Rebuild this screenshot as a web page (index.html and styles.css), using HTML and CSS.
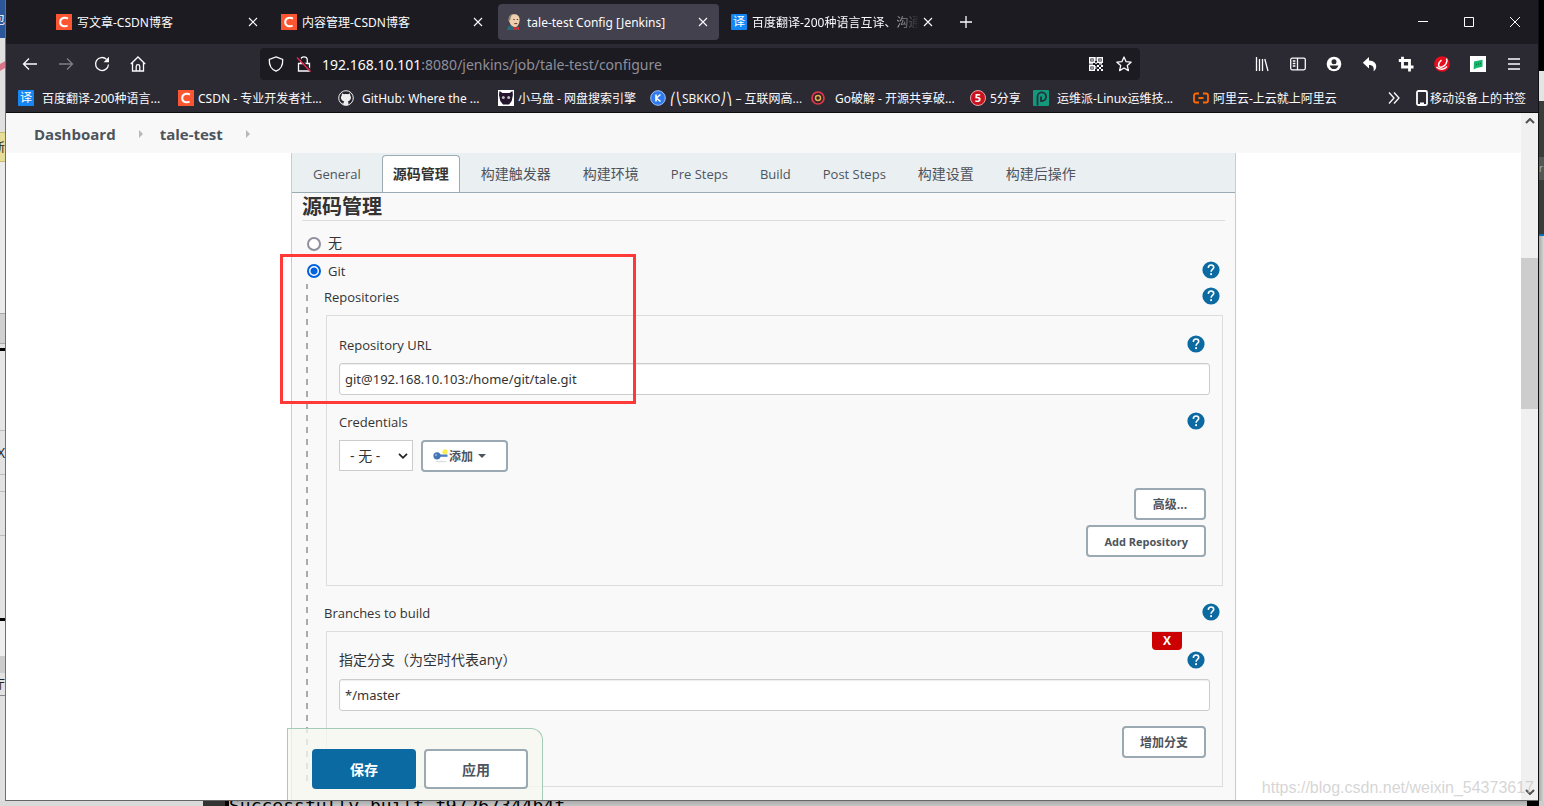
FILE: index.html
```html
<!DOCTYPE html>
<html lang="zh-CN">
<head>
<meta charset="utf-8">
<title>tale-test Config [Jenkins]</title>
<link rel="stylesheet" href="styles.css">
</head>
<body>
<svg class="defs" aria-hidden="true">
  <symbol id="help" viewBox="0 0 18 18"><circle cx="9" cy="9" r="8.6" fill="#0b6aa2"/><path d="M6.3 6.9C6.4 5 7.6 4 9.1 4s2.6 1 2.6 2.5c0 1.900-2.600 2.100-2.600 4.200" fill="none" stroke="#fff" stroke-width="1.600"/><rect x="8.200" y="12.200" width="1.800" height="1.900" fill="#fff"/></symbol>
  <symbol id="close" viewBox="0 0 10 10"><path d="M1 1l8 8M9 1L1 9" stroke="#fbfbfe" stroke-width="1.100"/></symbol>
  <symbol id="csdn" viewBox="0 0 16 16"><path fill="#fc5531" d="M0 0h16v16H0z"/><path d="M12 4.600C9.500 3.200 4.300 3.300 4.200 8.200c0 4.300 4.600 4.600 7.400 3.400" fill="none" stroke="#fff" stroke-width="2"/></symbol>
  <symbol id="crumb" viewBox="0 0 4 8"><path d="M0 0l4 4-4 4z" fill="#b8b8b8"/></symbol>
</svg>
<div class="desktop">
  <div class="strip-left" aria-hidden="true">
    <div class="s-blue">包</div><div class="s-pen"></div><div class="s-yellow">新</div><div class="s-light"></div><div class="s-grey"></div><div class="s-black"></div><div class="s-mid"></div><div class="s-x">X</div><div class="s-row"></div><div class="s-row2"></div><div class="s-tall"></div><div class="s-black"></div><div class="s-pale"></div><div class="s-grey2"></div><div class="s-text">厅</div><div class="s-end"></div>
  </div>
  <div class="window">
    <header class="tabs">
      <div class="tab"><svg class="fav"><use href="#csdn"/></svg><span class="tab-title">写文章-CSDN博客</span><button class="tab-close" aria-label="关闭"><svg><use href="#close"/></svg></button></div>
      <div class="tab"><svg class="fav"><use href="#csdn"/></svg><span class="tab-title">内容管理-CSDN博客</span><button class="tab-close" aria-label="关闭"><svg><use href="#close"/></svg></button></div>
      <div class="tab tab-on"><svg class="fav" viewBox="0 0 16 16"><path d="M1 16c0-3 2-4.500 4-4.500l4 2 3-1 2 3.500z" fill="#2d6a78"/><path d="M2.800 5C2.800 2 5 .2 8.200.2s5.600 2 5.400 5.600c-.1 3.700-1.700 7.300-4.500 7.300-3 0-5-2.700-5.400-4.800-.8-.4-1.100-2.100-.9-3.300z" fill="#efd0ae"/><path d="M2.900 7C2 2.500 4.200.2 7 .3 5.200 1.500 4.500 3.500 4.300 6z" fill="#8d8270"/><path d="M7.300 5.500h1.400M10.800 5.500h1.300M8.300 9.600h3" stroke="#5b3d2e"/><path d="M8 12.700l2.500 1 2.500-1v3.300l-2.500-1L8 16z" fill="#e02b2b"/></svg><span class="tab-title">tale-test Config [Jenkins]</span><button class="tab-close" aria-label="关闭"><svg><use href="#close"/></svg></button></div>
      <div class="tab"><span class="fav fan">译</span><span class="tab-title fade">百度翻译-200种语言互译、沟通</span><button class="tab-close" aria-label="关闭"><svg><use href="#close"/></svg></button></div>
      <button class="new-tab" aria-label="新标签"><svg viewBox="0 0 12 12"><path d="M6 0v12M0 6h12" stroke="#fbfbfe" stroke-width="1.300"/></svg></button>
      <div class="win-btns">
        <button aria-label="最小化"><svg viewBox="0 0 10 10"><path d="M0 4.500h10" stroke="#fff"/></svg></button>
        <button aria-label="最大化"><svg viewBox="0 0 10 10"><path d="M.5.5h9v9h-9z" fill="none" stroke="#fff"/></svg></button>
        <button aria-label="关闭窗口"><svg viewBox="0 0 10 10"><path d="M0 0l10 10M10 0L0 10" stroke="#fff"/></svg></button>
      </div>
    </header>
    <nav class="toolbar">
      <button aria-label="后退"><svg viewBox="0 0 16 16"><path d="M15 8H1.500M7 2.500L1.500 8 7 13.500" class="ln"/></svg></button>
      <button aria-label="前进" class="dim"><svg viewBox="0 0 16 16"><path d="M1 8h13.500M9 2.500L14.500 8 9 13.500" class="ln"/></svg></button>
      <button aria-label="刷新"><svg viewBox="0 0 16 16"><path d="M14.500 8.500A6.500 6.500 0 1 1 12.600 3.400" class="ln"/><path d="M15 .8v5.400H9.600z" fill="#fbfbfe"/></svg></button>
      <button aria-label="主页"><svg viewBox="0 0 16 16"><path d="M.8 8L8 1l7.200 7M2.500 6.700V15h11V6.700M6.200 15v-4.500a1.800 1.800 0 0 1 3.600 0V15" class="ln"/></svg></button>
      <div class="url">
        <svg viewBox="0 0 16 16"><path d="M8 .9L14.700 3.400C15 9 12.500 13.500 8 15.200 3.500 13.500 1 9 1.300 3.400z" class="ln"/></svg>
        <svg class="lock" viewBox="0 0 16 16"><path d="M2.500 7.500h11V15h-11zM4.700 7.500V4.200a3.300 3.300 0 0 1 6.600 0v3.300" class="ln"/><path d="M2.500 1l13 14" stroke="#1c1b22" stroke-width="1.500"/><path d="M1 1.500l13.500 14" stroke="#e22850" stroke-width="1.500"/></svg>
        <span class="addr"><b>192.168.10.101</b>:8080/jenkins/job/tale-test/configure</span>
        <svg class="qr" viewBox="0 0 14 14"><path d="M.7.7h4.600v4.600H.7zM8.700.7h4.600v4.600H8.700zM.7 8.700h4.600v4.600H.7z" fill="none" stroke="#fbfbfe" stroke-width="1.400"/><path d="M2.300 2.300h1.500v1.500H2.300zM10.300 2.300h1.500v1.500h-1.500zM2.300 10.300h1.500v1.500H2.300zM6.300 0h1.200v4H6.300zM6.300 5.500h1.500V7H6.300zM0 6.300h4v1.200H0zM8 8h2v2H8zM12 8h2v2h-2zM10 10h2v2h-2zM8 12h2v2H8zM12 12h2v2h-2zM10 6.300h3v1.200h-3zM6.300 9h1v3h-1z" fill="#fbfbfe"/></svg>
        <svg class="star" viewBox="0 0 16 16"><path d="M8 1l2.100 4.700 5 .5-3.800 3.400 1.100 5L8 12l-4.400 2.600 1.100-5L.9 6.200l5-.5z" class="ln" stroke-linejoin="round"/></svg>
      </div>
      <button aria-label="书库"><svg viewBox="0 0 16 16"><path d="M2.500 1v14M5.500 3v12M8.500 3v12M10.800 3l3.200 12" class="ln"/></svg></button>
      <button aria-label="侧栏"><svg viewBox="0 0 16 16"><rect x=".7" y="2.200" width="14.600" height="11.600" rx="1.500" class="ln"/><path d="M7.500 2v12M2.800 5h2.600M2.800 7.500h2.600M2.800 10h2.600" class="ln"/></svg></button>
      <button aria-label="账户"><svg viewBox="0 0 16 16"><circle cx="8" cy="8" r="7.300" fill="#fff"/><circle cx="8" cy="5.800" r="2.500" fill="#2b2a33"/><path d="M3.700 9.500h8.600c-.5 2.500-2.300 3.600-4.300 3.600s-3.800-1.100-4.300-3.600z" fill="#2b2a33"/></svg></button>
      <button aria-label="撤销"><svg viewBox="0 0 16 16"><path d="M7 1v3.500c5 0 7.500 3 7.200 6.500-.1 1.800-1.200 3.300-2.700 4.200C12.500 11 10.500 9 7 9v3.500L.8 6.800z" fill="#fff"/></svg></button>
      <button aria-label="截图"><svg viewBox="0 0 16 16"><path d="M4.500 .8v10.200h11M.8 4.500h10.700V15.500" fill="none" stroke="#fff" stroke-width="2.800"/></svg></button>
      <button aria-label="扩展"><svg viewBox="0 0 16 16"><circle cx="8" cy="8" r="7.800" fill="#e60d1c"/><path d="M12.500 2.500c1.500 3-1 7-4 8.300-2.500 1-4.300 0-3.900-2.300.3-1.700 1.500-3.300 2.900-4.300M2.500 11c3.500 3.500 8 2.500 10.500-.5" fill="none" stroke="#fff" stroke-width="1.500"/></svg></button>
      <button aria-label="消息"><svg viewBox="0 0 16 16"><path d="M0 0h16v16H0z" fill="#fff"/><path d="M4 5.500l8.500-1.800v7L6.500 12l-2.800 1.500z" fill="#12b76a"/><path d="M6 8.400h1M8 8h1M10 7.600h1" stroke="#086c3c"/></svg></button>
      <button aria-label="菜单"><svg viewBox="0 0 16 16"><path d="M2 3h12M2 8h12M2 13h12" class="ln"/></svg></button>
    </nav>
    <nav class="bookmarks">
      <a href="#" class="wide-gap"><span class="fav fan">译</span><span>百度翻译-200种语言...</span></a>
      <a href="#"><svg class="fav"><use href="#csdn"/></svg><span>CSDN - 专业开发者社...</span></a>
      <a href="#" class="wide-gap"><svg class="fav" viewBox="0 0 16 16"><circle cx="8" cy="8" r="7.300" fill="#24232b" stroke="#eee"/><path d="M5.800 15v-2c-1.800.2-2-.9-2.800-1.300M4 3.200l2 1.100c1.300-.4 2.700-.4 4 0l2-1.100.3 2.300c1.600 2.400.3 5.200-2.300 5.700.3.600.4 1.200.4 1.800v2.200H5.600V13c0-.6.100-1.200.5-1.800C3.300 10.700 2.100 8 3.700 5.500z" fill="#eee"/></svg><span>GitHub: Where the ...</span></a>
      <a href="#"><svg class="fav" viewBox="0 0 16 16"><path d="M0 0h16v16H0z" fill="#fff"/><path d="M1.500 1l3 2h7l3-2 .4 4-1.200 6L11 14.500H5L2.300 11 1 5z" fill="#25152d"/><circle cx="5.300" cy="7.500" r="1.500" fill="#bbb"/><circle cx="10.700" cy="7.500" r="1.500" fill="#bbb"/></svg><span>小马盘 - 网盘搜索引擎</span></a>
      <a href="#"><svg class="fav" viewBox="0 0 16 16"><circle cx="8" cy="8" r="7.300" fill="#2f7af0" stroke="#9fc0f5"/><path d="M6 4.500v7M10.500 4.500L6.300 8l4.200 3.500" fill="none" stroke="#fff" stroke-width="1.600"/></svg><span class="narrow">⎛⎝SBKKO⎠⎞ – 互联网高...</span></a>
      <a href="#" class="wide-gap"><svg class="fav" viewBox="0 0 16 16"><circle cx="7" cy="8" r="6" fill="#35232b" stroke="#e8374c" stroke-width="1.700"/><circle cx="7" cy="8" r="2.500" fill="none" stroke="#e2b04a" stroke-width="1.500"/></svg><span>Go破解 - 开源共享破...</span></a>
      <a href="#"><span class="fav five">5</span><span>5分享</span></a>
      <a href="#" class="wide-gap"><svg class="fav" viewBox="0 0 16 16"><rect width="16" height="16" rx="1" fill="#12997c"/><path d="M4.500 15.500V6.500a4.300 4.300 0 1 1 4.300 4.500H8V6.500" fill="none" stroke="#24313a" stroke-width="1.800"/></svg><span>运维派-Linux运维技...</span></a>
      <a href="#"><svg class="fav" viewBox="0 0 16 16"><path d="M6 3.500H3a2 2 0 0 0-2 2v5a2 2 0 0 0 2 2h3M10 3.500h3a2 2 0 0 1 2 2v5a2 2 0 0 1-2 2h-3M5.500 8h5" fill="none" stroke="#ff6a00" stroke-width="1.800"/></svg><span>阿里云-上云就上阿里云</span></a>
      <button class="more" aria-label="更多书签"><svg viewBox="0 0 12 12"><path d="M1 .5L6 6l-5 5.500M6 .5L11 6l-5 5.500" class="ln"/></svg></button>
      <a href="#" class="mobile"><svg viewBox="0 0 12 16"><rect x="1" y="1" width="10" height="14" rx="1.500" fill="none" stroke="#fff" stroke-width="1.800"/><path d="M4 13.500h4" stroke="#fff" stroke-width="2"/></svg><span>移动设备上的书签</span></a>
    </nav>
    <div class="viewport">
      <main class="page">
        <nav class="crumbs"><a href="#">Dashboard</a><svg><use href="#crumb"/></svg><a href="#">tale-test</a><svg><use href="#crumb"/></svg></nav>
        <div class="stage">
          <form class="panel">
            <div class="sections">
              <a href="#">General</a><a href="#" class="on zh">源码管理</a><a href="#" class="zh">构建触发器</a><a href="#" class="zh">构建环境</a><a href="#">Pre Steps</a><a href="#">Build</a><a href="#">Post Steps</a><a href="#" class="zh">构建设置</a><a href="#" class="zh">构建后操作</a>
            </div>
            <div class="body">
              <h1>源码管理</h1>
              <div class="row first"><input type="radio" name="scm" id="none"><label for="none" class="zh">无</label></div>
              <div class="row git"><input type="radio" name="scm" id="git" checked><label for="git">Git</label><button type="button" class="help" aria-label="帮助"><svg><use href="#help"/></svg></button></div>
              <div class="nested">
                <div class="row"><span>Repositories</span><button type="button" class="help" aria-label="帮助"><svg><use href="#help"/></svg></button></div>
                <section class="box">
                  <div class="row"><label for="repo">Repository URL</label><button type="button" class="help" aria-label="帮助"><svg><use href="#help"/></svg></button></div>
                  <input class="text" id="repo" type="text" value="git@192.168.10.103:/home/git/tale.git">
                  <div class="row spaced"><label for="cred">Credentials</label><button type="button" class="help" aria-label="帮助"><svg><use href="#help"/></svg></button></div>
                  <div class="controls">
                    <div class="select"><select id="cred"><option>- 无 -</option></select><svg viewBox="0 0 10 6"><path d="M1 .8l4 4 4-4" fill="none" stroke="#222" stroke-width="1.700"/></svg></div>
                    <button type="button" class="btn add"><svg class="key" viewBox="0 0 16 14"><ellipse cx="8" cy="12.500" rx="6" ry=".8" fill="#ddd"/><circle cx="12" cy="2.800" r="2.600" fill="#fbf04e"/><path d="M5 5.500h9.500v2.300H5z" fill="#4d7fc0"/><circle cx="4" cy="6.800" r="3.600" fill="#4374b7"/><circle cx="3" cy="6" r="1.200" fill="#83a8d8"/></svg>添加<svg class="caret" viewBox="0 0 8 4"><path d="M0 0h8L4 4z" fill="#4d545d"/></svg></button>
                  </div>
                  <div class="actions"><button type="button" class="btn">高级...</button><button type="button" class="btn en">Add Repository</button></div>
                </section>
                <div class="row spaced"><span>Branches to build</span><button type="button" class="help" aria-label="帮助"><svg><use href="#help"/></svg></button></div>
                <section class="box">
                  <button type="button" class="remove">X</button>
                  <div class="row"><label for="branch" class="zh">指定分支（为空时代表any）</label><button type="button" class="help" aria-label="帮助"><svg><use href="#help"/></svg></button></div>
                  <input class="text" id="branch" type="text" value="*/master">
                  <div class="actions close"><button type="button" class="btn">增加分支</button></div>
                </section>
              </div>
            </div>
          </form>
          <div class="save-bar"><button class="save">保存</button><button class="apply">应用</button></div>
          <div class="mark"></div>
        </div>
      </main>
      <div class="scroll" aria-hidden="true"><svg viewBox="0 0 10 6"><path d="M1 5l4-4 4 4" fill="none" stroke="#505050" stroke-width="2"/></svg><div class="thumb"></div><svg viewBox="0 0 10 6"><path d="M1 1l4 4 4-4" fill="none" stroke="#505050" stroke-width="2"/></svg></div>
      <div class="watermark">https://blog.csdn.net/weixin_54373617</div>
    </div>
  </div>
  <div class="strip-right" aria-hidden="true"><div class="r-black"></div><div class="r-white"></div><div class="r-dark"></div><div class="r-cell">r</div><div class="r-dark2"></div><div class="r-rest"></div></div>
  <div class="strip-bottom" aria-hidden="true"><div class="b-left"></div><div class="b-dark"></div><div class="b-term">Successfully built f97267344b4f</div><div class="b-black"></div><div class="b-end"></div></div>
</div>
</body>
</html>
```

FILE: styles.css
```css
* { box-sizing: border-box; }
body { margin: 0; font-family: "Open Sans", "Noto Sans CJK SC", sans-serif; font-size: 13px; color: #333; }
button { border: 0; padding: 0; margin: 0; background: none; font: inherit; color: inherit; }
a { color: inherit; text-decoration: none; }
svg { display: block; flex: none; }
.defs { position: absolute; width: 0; height: 0; }
.ln { fill: none; stroke: #fbfbfe; stroke-width: 1.3; }

.desktop { display: grid; grid-template-columns: 6px minmax(0, 1fr) 6px; grid-template-rows: minmax(0, 1fr) 5px; height: 100vh; overflow: hidden; background: #c8c8c8; }
.window { display: flex; flex-direction: column; min-height: 0; background: #fff; border-bottom: 1px solid #666; }

.strip-left { display: flex; flex-direction: column; overflow: hidden; border-right: 1px solid #707070; background: #e2e2e2; font-size: 12px; color: #222; }
.strip-left div { flex: none; display: flex; justify-content: flex-end; align-items: center; overflow: hidden; }
.s-blue { height: 38px; background: #2b579a; color: #fff; }
.s-pen { height: 94px; background: linear-gradient(150deg, #e0e0e0 22px, #d8768a 23px, #d8768a 28px, #e0e0e0 29px); }
.s-yellow { height: 30px; background: #e6dd98; border: solid #c7bb6a; border-width: 1px 0; }
.s-light { height: 151px; background: #ebebeb; }
.s-grey { height: 31px; background: #d0d0d0; border: solid #aaa; border-width: 1px 0; }
.strip-left .s-black { height: 3px; background: #000; margin-top: 4px; }
.s-mid { height: 80px; background: #e6e6e6; border-bottom: 1px solid #bbb; }
.s-x { height: 44px; font-size: 14px; border-bottom: 1px solid #bbb; }
.s-row { height: 17px; border-bottom: 1px solid #bbb; }
.s-row2 { height: 44px; border-bottom: 1px solid #bbb; }
.s-tall { height: 78px; }
.s-pale { height: 35px; background: #eee; }
.s-grey2 { height: 17px; background: #ccc; }
.s-text { height: 23px; border-bottom: 1px solid #888; }
.s-end { height: 120px; background: #e0e0e0; }

.strip-right { display: flex; flex-direction: column; border-left: 1px solid #111; }
.r-black { height: 71px; background: #000; }
.r-white { height: 30px; background: #e4e4e4; }
.r-dark { height: 56px; background: #383c3b; }
.r-cell { height: 23px; background: #535756; color: #aaa; font-size: 10px; line-height: 22px; overflow: hidden; }
.r-dark2 { height: 56px; background: #383c3b; border-bottom: 2px solid #0a72bd; }
.r-rest { flex: 1; background: linear-gradient(90deg, #a8a8a8, #d8d8d8); }

.strip-bottom { grid-column: 1 / -1; display: flex; overflow: hidden; background: #b5b5b5; }
.b-left { width: 203px; background: #dadada; }
.b-dark { width: 26px; background: linear-gradient(90deg, #333 22px, #000 22px); }
.b-term { flex: 1; background: linear-gradient(#969696, #c4c4c4); font: 18px/18px "DejaVu Sans Mono", monospace; color: #000; white-space: nowrap; margin-top: -4px; }
.b-black { width: 12px; background: #000; }
.b-end { width: 5px; background: #ccc; }

.tabs, .bookmarks { font-family: "Noto Sans", "Noto Sans CJK SC", sans-serif; }
.tabs { display: flex; align-items: center; gap: 4px; height: 44px; flex: none; padding-left: 42px; background: #1c1b22; color: #fbfbfe; font-size: 12px; }
.tab { display: flex; align-items: center; width: 221px; height: 36px; padding: 0 7px 0 8px; border-radius: 4px; }
.tab-on { background: #42414d; }
.fav { width: 16px; height: 16px; flex: none; }
.fan { display: flex; align-items: center; justify-content: center; background: #1487f5; border-radius: 1px; color: #fff; font-size: 12px; line-height: 16px; }
.tab-title { flex: 1; min-width: 0; margin-left: 5px; overflow: hidden; white-space: nowrap; }
.fade { -webkit-mask-image: linear-gradient(90deg, #000 80%, transparent); mask-image: linear-gradient(90deg, #000 80%, transparent); }
.tab-close { width: 18px; display: flex; justify-content: center; }
.tab-close svg { width: 10px; height: 10px; }
.new-tab { width: 36px; display: flex; justify-content: center; }
.new-tab svg { width: 12px; height: 12px; }
.win-btns { display: flex; margin-left: auto; }
.win-btns button { width: 46px; display: flex; justify-content: center; }
.win-btns svg { width: 10px; height: 10px; }

.toolbar { display: flex; align-items: center; gap: 4px; flex: none; height: 40px; padding: 0 8px; background: #2b2a33; }
.toolbar > button { width: 32px; height: 32px; display: flex; align-items: center; justify-content: center; }
.toolbar > button svg { width: 16px; height: 16px; }
.dim { opacity: .4; }
.url { flex: 1; min-width: 0; display: flex; align-items: center; height: 32px; margin: 0 102px; padding: 0 8px; background: #1c1b22; border-radius: 4px; }
.url svg { width: 16px; height: 16px; }
.url .lock { margin-left: 12px; }
.addr { flex: 1; margin-left: 10px; font-family: "Noto Sans", sans-serif; font-size: 14px; color: #8f8f9a; white-space: nowrap; overflow: hidden; }
.addr b { font-weight: 400; color: #fbfbfe; }
.url .qr { width: 14px; height: 14px; }
.url .star { margin-left: 13px; }

.bookmarks { display: grid; grid-template-columns: 160px 160px 160px 152px 161px 159px 63px 160px 150px 1fr auto; align-items: center; flex: none; height: 29px; padding: 0 12px; background: #2b2a33; border-bottom: 1px solid #0c0c0d; color: #fbfbfe; font-size: 12px; }
.bookmarks a { display: flex; align-items: center; gap: 4px; white-space: nowrap; }
.bookmarks .wide-gap { gap: 8px; }
.bookmarks .narrow { font-family: "Open Sans", "Noto Sans CJK SC", sans-serif; }
.five { border-radius: 8px; background: #c91420; border: 1px solid #e7a3a6; font-size: 11px; font-weight: 700; line-height: 14px; text-align: center; }
.more { display: flex; justify-content: flex-end; padding-right: 16px; }
.more svg { width: 12px; height: 12px; }
.bookmarks .mobile { gap: 2px; }
.mobile svg { width: 12px; height: 16px; }

.viewport { position: relative; flex: 1; min-height: 0; display: flex; }
.page { flex: 1; min-width: 0; display: flex; flex-direction: column; overflow: hidden; background: #fff; }
.crumbs { display: flex; align-items: center; flex: none; height: 40px; padding: 1px 28px 0; background: #f8f8f8; font-size: 15px; font-weight: 700; color: #4d545d; }
.crumbs svg { width: 4px; height: 8px; margin: 0 17px 0 23px; }
.stage { position: relative; flex: 1; min-height: 0; width: 100%; max-width: 945px; margin: 0 auto; }
.panel { height: 100%; overflow: hidden; border: solid #ccc; border-width: 0 1px; background: #f9f9f9; }
.sections { display: flex; align-items: flex-end; gap: 10px; height: 40px; padding: 0 10px; background: #eaeff2; border-bottom: 1px solid #9aabb5; color: #4d545d; white-space: nowrap; line-height: 36px; }
.sections a { padding: 0 10px; border: 1px solid transparent; border-bottom: 0; border-radius: 4px 4px 0 0; }
.sections .on { background: #fff; border-color: #9aabb5; font-weight: 700; color: #333; }
.body { padding: 0 10px; }
h1 { margin: 0; height: 28px; border-bottom: 1px solid #ddd; font-size: 20px; line-height: 28px; }
.row { display: flex; align-items: center; height: 26px; }
.first { height: 28px; margin-top: 9px; }
.row input { appearance: none; width: 14px; height: 14px; margin: 0 7px 0 5px; border: 2px solid #8f8f9d; border-radius: 50%; background: #fff; }
.row input:checked { border-color: #0060df; background: radial-gradient(circle, #0060df 3px, #fff 4px); }
.zh { font-size: 14px; }
.row .zh { line-height: 18px; padding-bottom: 2px; }
.help { margin: 0 5px 2px auto; }
.help svg { width: 18px; height: 18px; }
.nested { padding-left: 22px; background: repeating-linear-gradient(#aaa 0 5px, transparent 5px 11px, #aaa 11px 12px) 4px 0 / 2px 100% no-repeat; }
.box { position: relative; margin: 5px 2px 0; padding: 16px 12px 28px; border: 1px solid #ddd; }
.spaced { margin-top: 14px; }
.text { display: block; width: 100%; height: 32px; margin-top: 5px; padding: 0 5px; border: 1px solid #ccc; border-radius: 3px; background: #fff; box-shadow: inset 0 1px 1px #eee; font: 13px "Noto Sans", sans-serif; color: #333; }
.controls { display: flex; gap: 8px; margin-top: 5px; }
.select { position: relative; width: 74px; }
.select select { appearance: none; width: 100%; height: 31px; padding: 0 10px; border: 1px solid #ccc; border-radius: 0; background: #fff; font: inherit; font-size: 14px; color: #333; }
.select svg { position: absolute; right: 5px; top: 13px; width: 10px; height: 6px; }
.btn { min-width: 72px; height: 32px; padding: 0 16px; border: 2px solid #9aa9b2; border-radius: 4px; background: #fff; font-size: 12px; font-weight: 700; color: #4d545d; }
.en { font-size: 11px; }
.add { display: flex; align-items: center; width: 87px; padding: 0 10px; }
.key { width: 16px; height: 14px; }
.caret { width: 8px; height: 4px; margin-left: 5px; }
.actions { display: flex; flex-direction: column; align-items: flex-end; gap: 5px; margin: 16px 4px 0 0; }
.close { margin-top: 15px; }
.remove { position: absolute; top: 0; right: 40px; width: 30px; height: 18px; background: #c00; border-radius: 0 0 4px 4px; color: #fff; font-size: 12px; font-weight: 700; line-height: 18px; }
.save-bar { position: absolute; left: -4px; bottom: 0; display: flex; gap: 8px; padding: 20px 14px 11px 24px; border: 1px solid #a3cdb8; border-bottom: 0; border-radius: 0 12px 0 0; background: rgba(245, 247, 237, .75); }
.save-bar button { width: 104px; height: 40px; border-radius: 4px; font-size: 14px; font-weight: 700; }
.save { background: #0b6aa2; color: #fff; }
.save-bar .apply { background: #fff; border: 2px solid #9aa9b2; color: #4d545d; }
.mark { position: absolute; left: -11px; top: 101px; width: 356px; height: 150px; border: 3px solid #ff3838; pointer-events: none; }
.scroll { flex: none; width: 17px; display: flex; flex-direction: column; align-items: center; padding: 5px 0 5px; background: #f0f0f0; }
.scroll svg { width: 10px; height: 6px; }
.thumb { width: 17px; height: 151px; margin: 134px 0 auto; background: #cdcdcd; }
.watermark { position: absolute; right: 4px; bottom: 2px; font: 16px/20px "Liberation Sans", Arial, sans-serif; color: rgba(190, 190, 190, .65); }
```
